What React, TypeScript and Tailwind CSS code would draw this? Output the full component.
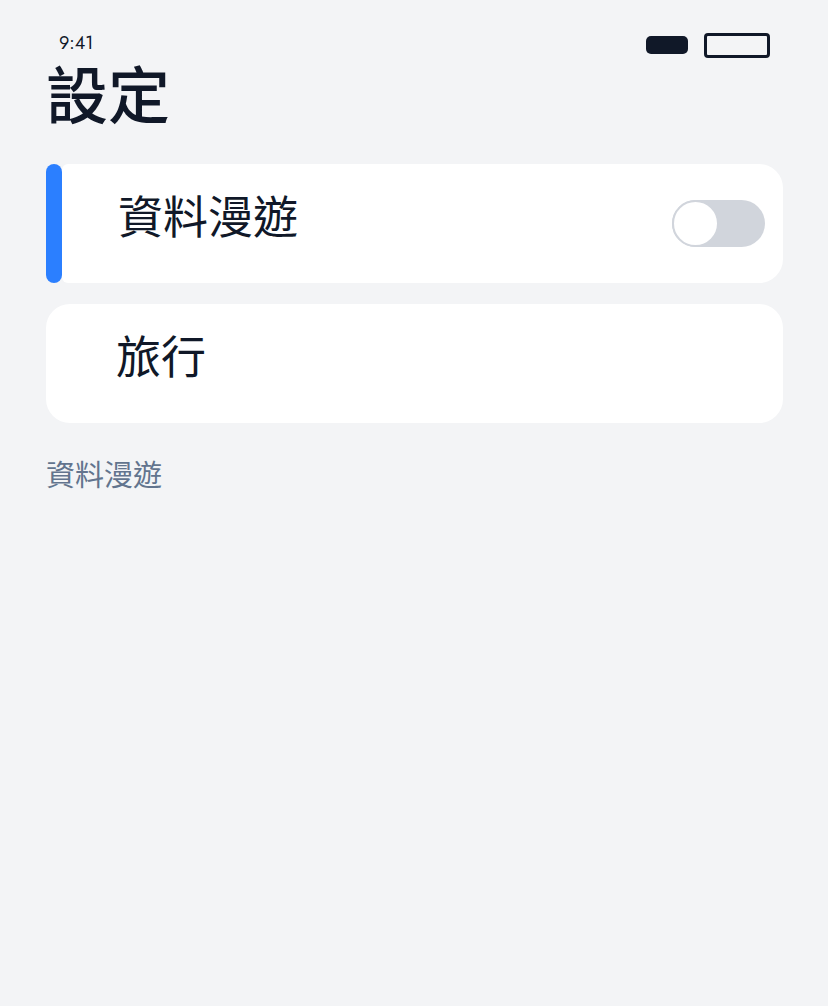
import React, { useState } from 'react';

const FONT = { fontFamily: '"Jost", "Liberation Sans", "Noto Sans CJK TC", sans-serif' };

function Toggle({ on, onChange }: { on: boolean; onChange: (v: boolean) => void }) {
  return (
    <button
      onClick={() => onChange(!on)}
      className={`relative w-[93px] h-[47px] rounded-full transition-colors ${on ? 'bg-blue-500' : 'bg-gray-300'}`}
    >
      <span
        className={`absolute top-0 left-0 w-[47px] h-[47px] rounded-full bg-white border-2 border-gray-300 transition-transform ${on ? 'translate-x-[46px]' : ''}`}
      />
    </button>
  );
}

export default function App() {
  const [roaming, setRoaming] = useState(false);

  return (
    <div className="min-h-screen bg-gray-100 pl-[46px] pr-[45px] text-gray-900" style={FONT}>
      {/* Status bar */}
      <div className="pt-[28px] h-[62px] flex items-center justify-between pl-[13px] pr-[13px]">
        <span className="text-[18px] leading-none -mt-[5px]">9:41</span>
        <div className="flex items-center gap-4">
          <div className="w-[42px] h-[18px] rounded-[5px] bg-gray-900" />
          <div className="w-[66px] h-[25px] rounded-[4px] border-[3px] border-gray-900" />
        </div>
      </div>

      <h1 className="mt-[5px] text-[62px] leading-none font-medium">設定</h1>

      <div className="mt-[35px] flex flex-col gap-[21px]">
        {/* Selected row */}
        <div className="flex h-[119px]">
          <div className="w-[16px] rounded-full bg-blue-500" />
          <div className="flex-1 bg-white rounded-r-[24px] rounded-l-[6px] flex items-center justify-between pl-[56px] pr-[18px]">
            <span className="text-[45px] leading-none font-normal -mt-[10px]">資料漫遊</span>
            <Toggle on={roaming} onChange={setRoaming} />
          </div>
        </div>

        <div className="h-[119px] bg-white rounded-[24px] flex items-center pl-[70px] pr-[18px]">
          <span className="text-[45px] leading-none font-normal -mt-[10px]">旅行</span>
        </div>
      </div>

      <p className="mt-[39px] text-[29px] leading-none text-slate-500">資料漫遊</p>
    </div>
  );
}
